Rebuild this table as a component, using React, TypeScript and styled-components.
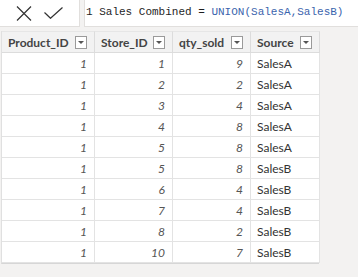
import React from "react";
import styled, { createGlobalStyle } from "styled-components";

const Global = createGlobalStyle`
  html, body { margin: 0; padding: 0; background: #f3f2f1; }
  body { font-family: Lato, "Liberation Sans", sans-serif; }
`;

const Page = styled.div`
  width: 358px;
  height: 277px;
  background: #f3f2f1;
  overflow: hidden;
`;

const FormulaBar = styled.div`
  display: flex;
  height: 27px;
  gap: 4px;
`;

const ActionBox = styled.div`
  width: 80px;
  box-sizing: border-box;
  background: #ffffff;
  border-right: 1px solid #e1dfdd;
  border-bottom: 1px solid #e1dfdd;
  display: flex;
  align-items: center;
  padding-left: 16px;
  gap: 12px;
`;

const Formula = styled.div`
  flex: 1;
  background: #ffffff;
  border-left: 1px solid #e1dfdd;
  border-bottom: 1px solid #e1dfdd;
  font-family: "Liberation Mono", "DejaVu Sans Mono", monospace;
  font-size: 11px;
  color: #1e1e1e;
  padding: 6px 0 0 1px;
  white-space: pre;
  box-sizing: border-box;
`;

const Fn = styled.span`
  color: #3a64ad;
`;

const Table = styled.div`
  margin-top: 4px;
  margin-left: 1px;
  width: 318px;
  display: grid;
  grid-template-columns: 93px 78px 78px 69px;
  background: #ffffff;
  border-left: 1px solid #e0e0e0;
  border-bottom: 1px solid #d6d6d6;
  box-sizing: border-box;
`;

const HeadCell = styled.div`
  height: 22px;
  box-sizing: border-box;
  background: #f2f2f2;
  border-right: 1px solid #dcdcdc;
  border-bottom: 1px solid #dcdcdc;
  border-top: 1px solid #e6e6e6;
  display: flex;
  align-items: center;
  justify-content: space-between;
  padding: 0 7px 0 6px;
  font-family: Lato, "Liberation Sans", sans-serif;
  font-weight: 700;
  font-size: 12px;
  color: #444444;
`;

const Drop = styled.span`
  width: 12px;
  height: 13px;
  box-sizing: border-box;
  border: 1px solid #9a9a9a;
  background: #ffffff;
  display: flex;
  align-items: center;
  justify-content: center;
  &::after {
    content: "";
    border-left: 3px solid transparent;
    border-right: 3px solid transparent;
    border-top: 3px solid #555;
  }
`;

const Cell = styled.div<{ $num?: boolean }>`
  height: 21px;
  box-sizing: border-box;
  border-right: 1px solid #e3e3e3;
  border-bottom: 1px solid #e3e3e3;
  display: flex;
  align-items: center;
  justify-content: ${(p) => (p.$num ? "flex-end" : "flex-start")};
  padding: ${(p) => (p.$num ? "0 7px 0 0" : "0 0 0 6px")};
  font-family: Lato, "Liberation Sans", sans-serif;
  font-size: 12px;
  font-style: ${(p) => (p.$num ? "italic" : "normal")};
  color: ${(p) => (p.$num ? "#555555" : "#333333")};
`;

const rows: [number, number, number, string][] = [
  [1, 1, 9, "SalesA"],
  [1, 2, 2, "SalesA"],
  [1, 3, 4, "SalesA"],
  [1, 4, 8, "SalesA"],
  [1, 5, 8, "SalesA"],
  [1, 5, 8, "SalesB"],
  [1, 6, 4, "SalesB"],
  [1, 7, 4, "SalesB"],
  [1, 8, 2, "SalesB"],
  [1, 10, 7, "SalesB"],
];

const headers = ["Product_ID", "Store_ID", "qty_sold", "Source"];

export default function App() {
  return (
    <Page>
      <Global />
      <FormulaBar>
        <ActionBox>
          <svg width="16" height="15" viewBox="0 0 16 15">
            <path d="M1 0.5 L15 14.5 M15 0.5 L1 14.5" stroke="#333" strokeWidth="1.2" fill="none" />
          </svg>
          <svg width="19" height="12" viewBox="0 0 19 12">
            <path d="M0.5 5.5 L6.5 11.3 L18.5 0.5" stroke="#333" strokeWidth="1.2" fill="none" />
          </svg>
        </ActionBox>
        <Formula>
          1 Sales Combined = <Fn>UNION(SalesA,SalesB)</Fn>
        </Formula>
      </FormulaBar>
      <Table>
        {headers.map((h) => (
          <HeadCell key={h}>
            {h}
            <Drop />
          </HeadCell>
        ))}
        {rows.map((r, i) => (
          <React.Fragment key={i}>
            <Cell $num>{r[0]}</Cell>
            <Cell $num>{r[1]}</Cell>
            <Cell $num>{r[2]}</Cell>
            <Cell>{r[3]}</Cell>
          </React.Fragment>
        ))}
      </Table>
    </Page>
  );
}
